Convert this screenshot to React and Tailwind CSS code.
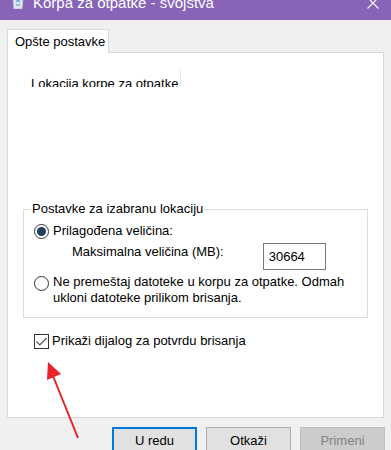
import React from "react";

function Radio({ checked }) {
  return (
    <div className="w-[15px] h-[15px] rounded-full border border-[#333333] bg-white flex items-center justify-center shrink-0">
      {checked && <div className="w-[9px] h-[9px] rounded-full bg-[#243f5c]" />}
    </div>
  );
}

export default function App() {
  return (
    <div className="relative w-[391px] h-[450px] overflow-hidden bg-[#f0f0f0] font-['Liberation_Sans',Arial,sans-serif] text-[13px] leading-[16px] text-black">
      {/* Title bar */}
      <div className="h-[20px] bg-[#8764b8] flex items-start overflow-hidden">
        <div className="ml-[12px] mt-[-3px] w-[12px] h-[12px]">
          <svg width="12" height="12" viewBox="0 0 12 12">
            <path d="M1 1 L11 1 L10 12 L2 12 Z" fill="#dfe6ee" stroke="#b8c4d0" strokeWidth="1" />
            <path d="M4 5 L6 3 L8 5" fill="none" stroke="#5a9bd5" strokeWidth="1.2" />
            <path d="M4 8 L8 8" stroke="#5a9bd5" strokeWidth="1.2" />
          </svg>
        </div>
        <div className="ml-[9px] mt-[-7px] text-[15px] leading-[20px] text-white whitespace-nowrap">
          Korpa za otpatke - svojstva
        </div>
        <div className="ml-auto mr-[12px] mt-[-3px]">
          <svg width="12" height="12" viewBox="0 0 12 12">
            <path d="M0.5 0.5 L11.5 11.5 M11.5 0.5 L0.5 11.5" stroke="#ffffff" strokeWidth="1.1" />
          </svg>
        </div>
      </div>

      {/* Tab */}
      <div className="mt-[9px] pl-[7px] flex">
        <div className="relative z-10 h-[24px] w-[102px] bg-white border-t border-l border-r border-[#d9d9d9] pl-[7px] pt-[4px] whitespace-nowrap">
          Opšte postavke
        </div>
      </div>

      {/* Panel */}
      <div className="mt-[-1px] ml-[7px] w-[377px] h-[366px] bg-white border border-[#d9d9d9] flex flex-col">
        {/* list view header */}
        <div className="mt-[17px] ml-[23px] h-[17px] overflow-hidden flex">
          <div className="w-[150px] border-r border-[#e5e5e5] pt-[6px] whitespace-nowrap">
            Lokacija korpe za otpatke
          </div>
        </div>

        {/* Group box */}
        <fieldset className="mt-[114px] ml-[15px] w-[345px] border border-[#dcdcdc]">
          <legend className="ml-[7px] px-[1px] whitespace-nowrap">Postavke za izabranu lokaciju</legend>
          <div className="pl-[10px] pb-[11px]">
            <div className="mt-[6px] flex items-center gap-[4px] h-[16px]">
              <Radio checked />
              <span>Prilagođena veličina:</span>
            </div>
            <div className="mt-[4px] flex items-start h-[27px]">
              <span className="ml-[38px] mt-[1px]">Maksimalna veličina (MB):</span>
              <div className="ml-[39px] w-[63px] h-[27px] border border-[#7a7a7a] pl-[5px] pt-[5px]">30664</div>
            </div>
            <div className="mt-[4px] flex items-start gap-[4px]">
              <div className="mt-[2px]"><Radio /></div>
              <span className="w-[300px]">
                Ne premeštaj datoteke u korpu za otpatke. Odmah ukloni datoteke prilikom brisanja.
              </span>
            </div>
          </div>
        </fieldset>

        {/* checkbox */}
        <div className="mt-[15px] ml-[26px] flex items-center gap-[3px] h-[16px]">
          <div className="w-[15px] h-[15px] border border-[#333333] bg-white flex items-center justify-center">
            <svg width="13" height="13" viewBox="0 0 13 13">
              <path d="M1.5 6.5 L4.8 9.8 L11.5 3" fill="none" stroke="#555555" strokeWidth="1.2" />
            </svg>
          </div>
          <span>Prikaži dijalog za potvrdu brisanja</span>
        </div>
      </div>

      {/* Buttons */}
      <div className="mt-[9px] ml-[112px] flex gap-[9px]">
        <div className="w-[85px] h-[28px] bg-[#e1e1e1] border-2 border-[#0078d7] flex items-center justify-center">U redu</div>
        <div className="w-[85px] h-[28px] bg-[#e1e1e1] border border-[#adadad] flex items-center justify-center">Otkaži</div>
        <div className="w-[85px] h-[28px] bg-[#cccccc] border border-[#bfbfbf] text-[#838383] flex items-center justify-center">Primeni</div>
      </div>

      {/* Red arrow annotation */}
      <svg className="absolute left-0 top-0 pointer-events-none" width="391" height="450" viewBox="0 0 391 450">
        <line x1="78" y1="438" x2="53" y2="376" stroke="#e8232b" strokeWidth="2" />
        <polygon points="48,362 61,374 47,380" fill="#e8232b" />
      </svg>
    </div>
  );
}
